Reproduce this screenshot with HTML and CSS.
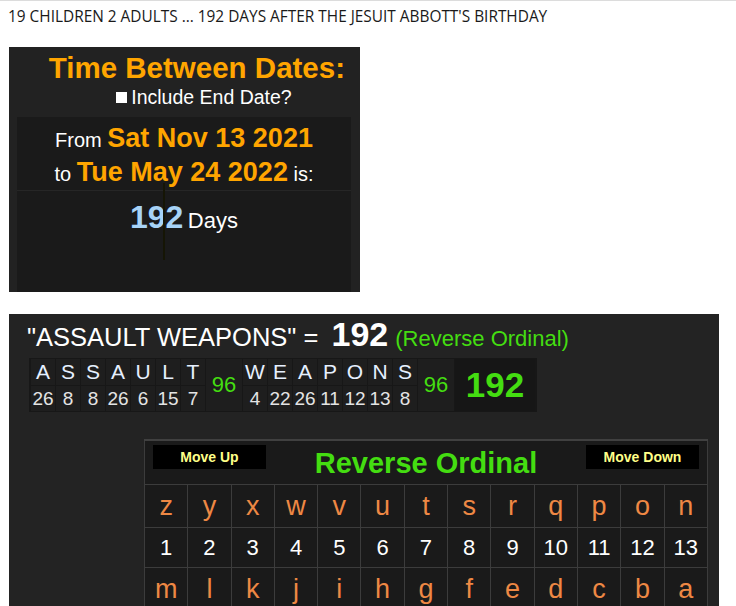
FILE: index.html
```html
<!DOCTYPE html>
<html>
<head>
<meta charset="utf-8">
<link rel="stylesheet" href="styles.css">
</head>
<body>
<div class="page">
  <p class="caption">19 CHILDREN 2 ADULTS ... 192 DAYS AFTER THE JESUIT ABBOTT'S BIRTHDAY</p>

  <div class="card dates">
    <h1 class="dates-title">Time Between Dates:</h1>
    <div class="include"><span class="check"></span>Include End Date?</div>
    <div class="panel range">
      <p class="range-line">From <b class="date">Sat Nov 13 2021</b></p>
      <p class="range-line">to <b class="date">Tue May 24 2022</b> is:</p>
    </div>
    <div class="panel result">
      <span class="days-num">192</span> <span class="days-word">Days</span>
    </div>
    <span class="glitch"></span>
  </div>

  <div class="card gem">
    <p class="gem-title">"ASSAULT WEAPONS" = <b class="gem-total">192</b> <span class="gem-cipher">(Reverse Ordinal)</span></p>
    <table class="breakdown">
      <tr class="letters">
        <td>A</td><td>S</td><td>S</td><td>A</td><td>U</td><td>L</td><td>T</td>
        <td class="sum" rowspan="2">96</td>
        <td>W</td><td>E</td><td>A</td><td>P</td><td>O</td><td>N</td><td>S</td>
        <td class="sum" rowspan="2">96</td>
        <td class="grand" rowspan="2">192</td>
      </tr>
      <tr class="values">
        <td>26</td><td>8</td><td>8</td><td>26</td><td>6</td><td>15</td><td>7</td>
        <td>4</td><td>22</td><td>26</td><td>11</td><td>12</td><td>13</td><td>8</td>
      </tr>
    </table>

    <table class="cipher">
      <tr>
        <td class="cipher-head" colspan="13">
          <div class="head-row">
            <span class="btn">Move Up</span>
            <span class="cipher-name">Reverse Ordinal</span>
            <span class="btn">Move Down</span>
          </div>
        </td>
      </tr>
      <tr class="c-letters">
        <td>z</td><td>y</td><td>x</td><td>w</td><td>v</td><td>u</td><td>t</td><td>s</td><td>r</td><td>q</td><td>p</td><td>o</td><td>n</td>
      </tr>
      <tr class="c-values">
        <td>1</td><td>2</td><td>3</td><td>4</td><td>5</td><td>6</td><td>7</td><td>8</td><td>9</td><td>10</td><td>11</td><td>12</td><td>13</td>
      </tr>
      <tr class="c-letters">
        <td>m</td><td>l</td><td>k</td><td>j</td><td>i</td><td>h</td><td>g</td><td>f</td><td>e</td><td>d</td><td>c</td><td>b</td><td>a</td>
      </tr>
    </table>
  </div>
</div>
</body>
</html>
```

FILE: styles.css
```css
html, body {
  margin: 0;
  padding: 0;
  background: #ffffff;
}
body {
  border-top: 1px solid #dcdcdc;
  font-family: "Liberation Sans", Arial, sans-serif;
  height: 605px;
  overflow: hidden;
}
.caption {
  margin: 0;
  padding: 7px 0 0 8px;
  font-family: "Open Sans", "Noto Sans", sans-serif;
  font-size: 15.4px;
  line-height: 18px;
  color: #1a1a1a;
  white-space: nowrap;
}

.card {
  position: relative;
  margin-left: 9px;
}

/* Time between dates */
.dates {
  margin-top: 21px;
  width: 351px;
  height: 245px;
  background: #222222;
  padding: 4px 9px 0 8px;
  box-sizing: border-box;
  display: flex;
  flex-direction: column;
}
.dates-title {
  margin: 0;
  text-align: right;
  padding-right: 6px;
  font-size: 29.5px;
  line-height: 34px;
  font-weight: bold;
  color: #ffa500;
}
.include {
  display: flex;
  align-items: center;
  justify-content: center;
  padding-left: 40px;
  font-size: 19.5px;
  line-height: 24px;
  color: #ffffff;
}
.check {
  width: 11px;
  height: 11px;
  background: #ffffff;
  margin-right: 4px;
  margin-top: 1px;
}
.panel {
  background: #1a1a1a;
  text-align: center;
  color: #ffffff;
}
.range {
  margin-top: 8px;
  padding-top: 6px;
  height: 74px;
  box-sizing: border-box;
  border-bottom: 1px solid #262626;
}
.range-line {
  margin: 0;
  font-size: 20px;
  line-height: 34px;
  height: 34px;
}
.date {
  font-size: 27px;
  line-height: 20px;
  color: #ffa500;
}
.result {
  flex: 1;
  padding-top: 8px;
  line-height: 36px;
}
.days-num {
  font-size: 32px;
  font-weight: bold;
  color: #a7d3f7;
}
.days-word {
  font-size: 22px;
}
.glitch {
  position: absolute;
  left: 154px;
  top: 136px;
  width: 2px;
  height: 77px;
  background: #151505;
}

/* Gematria card */
.gem {
  margin-top: 22px;
  width: 710px;
  height: 300px;
  background: #232323;
  padding-top: 5px;
  box-sizing: border-box;
}
.gem-title {
  margin: 0;
  padding-left: 18px;
  font-size: 25.5px;
  line-height: 30px;
  color: #ffffff;
  white-space: nowrap;
}
.gem-total {
  margin-left: 6px;
  font-size: 34px;
  line-height: 30px;
}
.gem-cipher {
  font-size: 22px;
  color: #44dd11;
}

.breakdown {
  margin: 4px 0 0 20px;
  border-collapse: separate;
  border-spacing: 1px;
  background: #171717;
  padding: 0 1px;
}
.breakdown td {
  padding: 0;
  text-align: center;
  background: #1e1e1e;
}
.letters td {
  width: 24px;
  height: 26px;
  font-size: 21px;
  line-height: 26px;
  color: #e6f0ff;
}
.values td {
  height: 25px;
  font-size: 19px;
  line-height: 25px;
  color: #e4e4e4;
}
.breakdown td.sum {
  width: 36px;
  font-size: 22px;
  color: #44dd11;
  background: #1e1e1e;
}
.breakdown td.grand {
  width: 80px;
  font-size: 35px;
  font-weight: bold;
  color: #44dd11;
  background: #161616;
}

.cipher {
  margin: 27px 0 0 135px;
  width: 564px;
  table-layout: fixed;
  border-collapse: collapse;
  background: #1a1a1a;
  border-top: 2px solid #404040;
}
.cipher td {
  border: 1px solid #3c3c3c;
  padding: 0;
  text-align: center;
}
.cipher td.cipher-head {
  height: 43px;
  vertical-align: top;
}
.head-row {
  display: flex;
  align-items: flex-start;
  justify-content: space-between;
  padding: 0 8px;
  height: 43px;
}
.btn {
  margin-top: 4px;
  width: 113px;
  height: 24px;
  line-height: 24px;
  background: #000000;
  color: #ffff88;
  font-size: 14px;
  font-weight: bold;
  text-align: center;
}
.cipher-name {
  margin-top: 5px;
  font-size: 29px;
  line-height: 34px;
  font-weight: bold;
  color: #44dd11;
}
.c-letters td {
  height: 42px;
  font-size: 27px;
  color: #ee8844;
}
.c-values td {
  height: 39px;
  font-size: 22px;
  color: #ffffff;
}
```
